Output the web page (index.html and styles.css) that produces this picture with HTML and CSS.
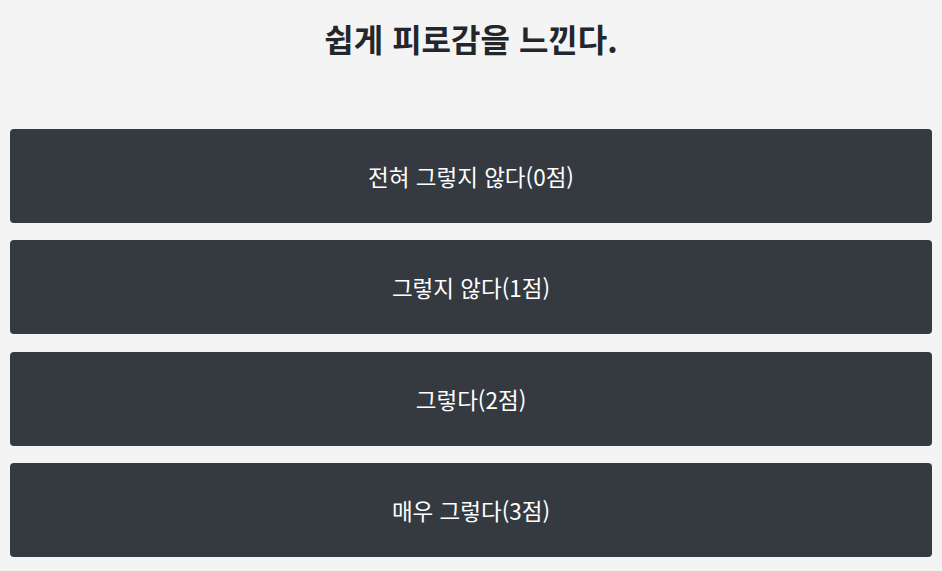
FILE: index.html
```html
<!DOCTYPE html>
<html lang="ko">
<head>
<meta charset="utf-8">
<link rel="stylesheet" href="styles.css">
</head>
<body>
<div class="page">
  <h1 class="question">쉽게 피로감을 느낀다.</h1>
  <div class="options">
    <button class="option">전혀 그렇지 않다(0점)</button>
    <button class="option">그렇지 않다(1점)</button>
    <button class="option">그렇다(2점)</button>
    <button class="option">매우 그렇다(3점)</button>
  </div>
</div>
</body>
</html>
```
FILE: styles.css
```css
html, body {
  margin: 0;
  padding: 0;
  background: #f4f4f4;
}
body {
  font-family: "Noto Sans CJK KR", "Noto Sans", sans-serif;
  color: #212529;
}
.page {
  padding: 0 10px;
}
.question {
  margin: 0;
  padding-top: 15px;
  height: 129px;
  box-sizing: border-box;
  text-align: center;
  font-size: 32px;
  font-weight: 700;
  line-height: 46px;
  color: #23262b;
}
.options {
  display: flex;
  flex-direction: column;
  gap: 17.33px;
}
.option {
  height: 94px;
  border: none;
  border-radius: 4px;
  background: #343a40;
  color: #ffffff;
  font-family: inherit;
  font-size: 22.5px;
  padding: 0;
}
```
